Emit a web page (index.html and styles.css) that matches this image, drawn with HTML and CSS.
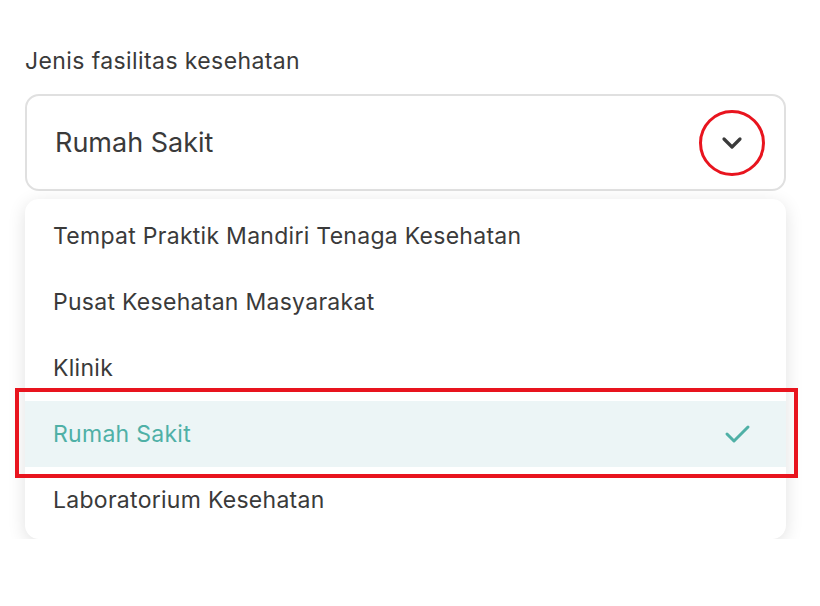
FILE: index.html
```html
<!DOCTYPE html>
<html lang="id">
<head>
<meta charset="UTF-8">
<meta name="viewport" content="width=device-width, initial-scale=1.0">
<title>Jenis fasilitas kesehatan</title>
<link rel="stylesheet" href="styles.css">
</head>
<body>

<div id="container">
  <label class="label" for="jenis">Jenis fasilitas kesehatan</label>

  <div class="select" id="jenis">
    <span class="select-value">Rumah Sakit</span>
    <span class="chevron">
      <svg width="22" height="14" viewBox="0 0 22 14"><path d="M3 3 L11 11 L19 3" fill="none" stroke="#3a3a3a" stroke-width="3.2" stroke-linecap="round" stroke-linejoin="round"/></svg>
      <span class="mark-circle"></span>
    </span>
  </div>

  <ul class="options">
    <li class="option">Tempat Praktik Mandiri Tenaga Kesehatan</li>
    <li class="option">Pusat Kesehatan Masyarakat</li>
    <li class="option">Klinik</li>
    <li class="option selected">
      Rumah Sakit
      <svg width="28" height="22" viewBox="0 0 28 22"><path d="M3 11 L10 18 L24 4" fill="none" stroke="#4fb0a6" stroke-width="3" stroke-linecap="round" stroke-linejoin="round"/></svg>
      <span class="mark-box"></span>
    </li>
    <li class="option">Laboratorium Kesehatan</li>
  </ul>
</div>

</body>
</html>
```

FILE: styles.css
```css
body {
  margin: 0;
  background-color: white;
  font-family: Inter, "Noto Sans", sans-serif;
  color: #3a3a3a;
}

#container {
  padding: 46px 34px 0 25px;
}

.label {
  display: block;
  font-size: 23px;
  letter-spacing: 0.4px;
  line-height: 30px;
  margin-bottom: 18px;
  color: #3a3a3a;
}

.select {
  display: flex;
  align-items: center;
  justify-content: space-between;
  border: 2px solid #e0e0e0;
  border-radius: 14px;
  padding: 0 20px 0 28px;
  box-sizing: border-box;
  height: 97px;
}

.select-value {
  font-size: 27px;
  color: #3a3a3a;
}

.chevron {
  position: relative;
  width: 40px;
  height: 40px;
  display: flex;
  align-items: center;
  justify-content: center;
  margin-right: 12px;
}

.mark-circle {
  position: absolute;
  left: -13px;
  top: -13px;
  width: 60px;
  height: 60px;
  border: 3px solid #e8141e;
  border-radius: 50%;
}

.options {
  list-style: none;
  margin: 8px 0 0 0;
  padding: 4px 0 6px 0;
  background-color: white;
  border-radius: 14px;
  box-shadow: 0 4px 18px rgba(0, 0, 0, 0.12);
}

.option {
  position: relative;
  display: flex;
  align-items: center;
  justify-content: space-between;
  height: 66px;
  padding: 0 34px 0 28px;
  font-size: 23px;
  letter-spacing: 0.28px;
  color: #3a3a3a;
}

.option.selected {
  background-color: #ecf5f6;
  color: #4fb0a6;
}

.mark-box {
  position: absolute;
  left: -10px;
  right: -12px;
  top: -13px;
  bottom: -11px;
  border: 4px solid #e8141e;
}
```
